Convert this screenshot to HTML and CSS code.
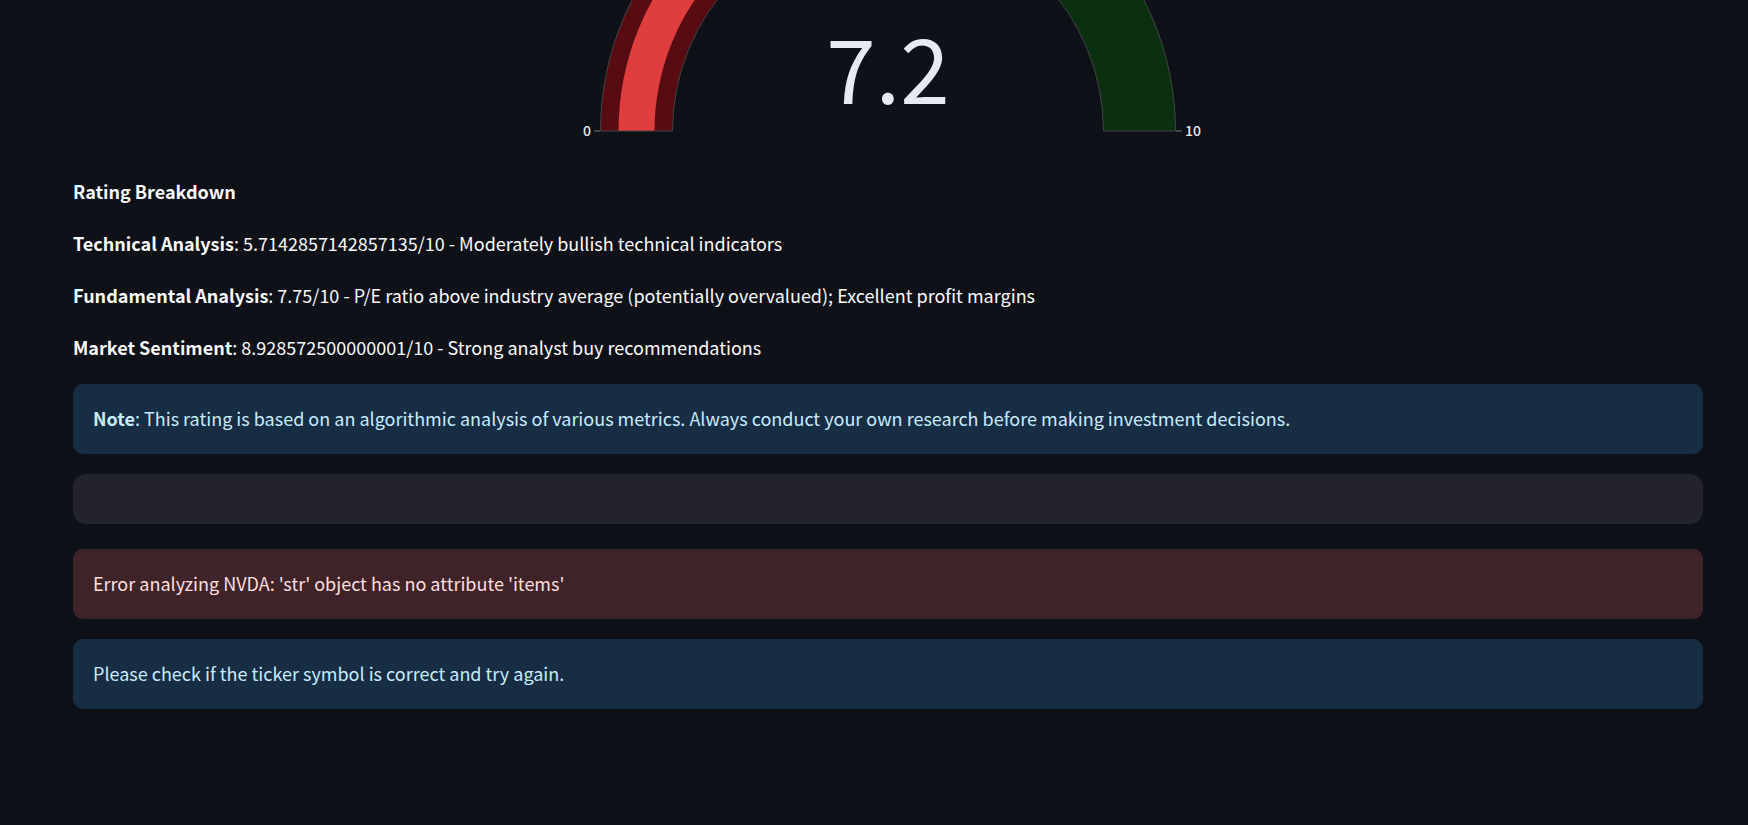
FILE: index.html
```html
<!DOCTYPE html>
<html lang="en">
<head>
<meta charset="utf-8">
<meta name="viewport" content="width=device-width, initial-scale=1">
<title>Stock Rating</title>
<link rel="stylesheet" href="styles.css">
</head>
<body>
<main class="page">
  <svg class="gauge" width="640" height="155" viewBox="0 0 640 155" role="img" aria-label="Overall rating 7.2 out of 10">
    <path class="gauge-low" d="M32.5 131A287.5 287.5 0 0 1 320 -156.5V-84.5A215.5 215.5 0 0 0 104.5 131Z"/>
    <path class="gauge-high" d="M320 -156.5A287.5 287.5 0 0 1 607.5 131H535.5A215.5 215.5 0 0 0 320 -84.5Z"/>
    <path class="gauge-bar" d="M50.5 131A269.5 269.5 0 0 1 320 -138.5V-102.5A233.5 233.5 0 0 0 86.5 131Z"/>
    <path class="gauge-outline" d="M32.5 131A287.5 287.5 0 0 1 607.5 131H535.5A215.5 215.5 0 0 0 104.5 131Z"/>
    <path class="gauge-tick" d="M26 131H32M608 131H614"/>
    <text class="gauge-label" x="23" y="136" text-anchor="end">0</text>
    <text class="gauge-label" x="617" y="136">10</text>
    <text class="gauge-value" x="320" y="104" text-anchor="middle">7.2</text>
  </svg>
  <section class="breakdown">
    <p><strong>Rating Breakdown</strong></p>
    <p><strong>Technical Analysis</strong>: 5.7142857142857135/10 - Moderately bullish technical indicators</p>
    <p><strong>Fundamental Analysis</strong>: 7.75/10 - P/E ratio above industry average (potentially overvalued); Excellent profit margins</p>
    <p><strong>Market Sentiment</strong>: 8.928572500000001/10 - Strong analyst buy recommendations</p>
  </section>
  <div class="alert info"><strong>Note</strong>: This rating is based on an algorithmic analysis of various metrics. Always conduct your own research before making investment decisions.</div>
  <div class="placeholder"></div>
  <div class="alert error" role="alert">Error analyzing NVDA: 'str' object has no attribute 'items'</div>
  <div class="alert info">Please check if the ticker symbol is correct and try again.</div>
</main>
</body>
</html>
```
FILE: styles.css
```css
* {
  box-sizing: border-box;
}

body {
  margin: 0;
  min-height: 100vh;
  background: #0e1117;
  color: #fafafa;
  font-family: "Noto Sans CJK JP", "Noto Sans", sans-serif;
  font-size: 18px;
  line-height: 32px;
}

.page {
  display: flex;
  flex-direction: column;
  gap: 20px;
  padding: 0 45px 60px 73px;
}

.gauge {
  display: block;
  align-self: center;
  max-width: 100%;
  overflow: hidden;
}

.gauge-low {
  fill: #560c11;
}

.gauge-high {
  fill: #0a3010;
}

.gauge-bar {
  fill: #e03e3e;
}

.gauge-outline,
.gauge-tick {
  fill: none;
  stroke: #444;
}

.gauge-tick {
  stroke-width: 2;
}

.gauge-label {
  fill: #e6eaf1;
  font-size: 14px;
  font-weight: 500;
}

.gauge-value {
  fill: #e6eaf1;
  font-size: 89px;
}

.breakdown {
  display: flex;
  flex-direction: column;
  gap: 20px;
  padding-bottom: 1px;
}

.breakdown p {
  margin: 0;
}

.alert {
  padding: 19px 20px 21px;
  border-radius: 10px;
  line-height: 30px;
}

.info {
  background: #172d43;
  color: #c7ebff;
}

.error {
  background: #3e2428;
  color: #ffdede;
}

.placeholder {
  height: 50px;
  margin-bottom: 5px;
  border-radius: 13px;
  background: #23232c;
}
```
